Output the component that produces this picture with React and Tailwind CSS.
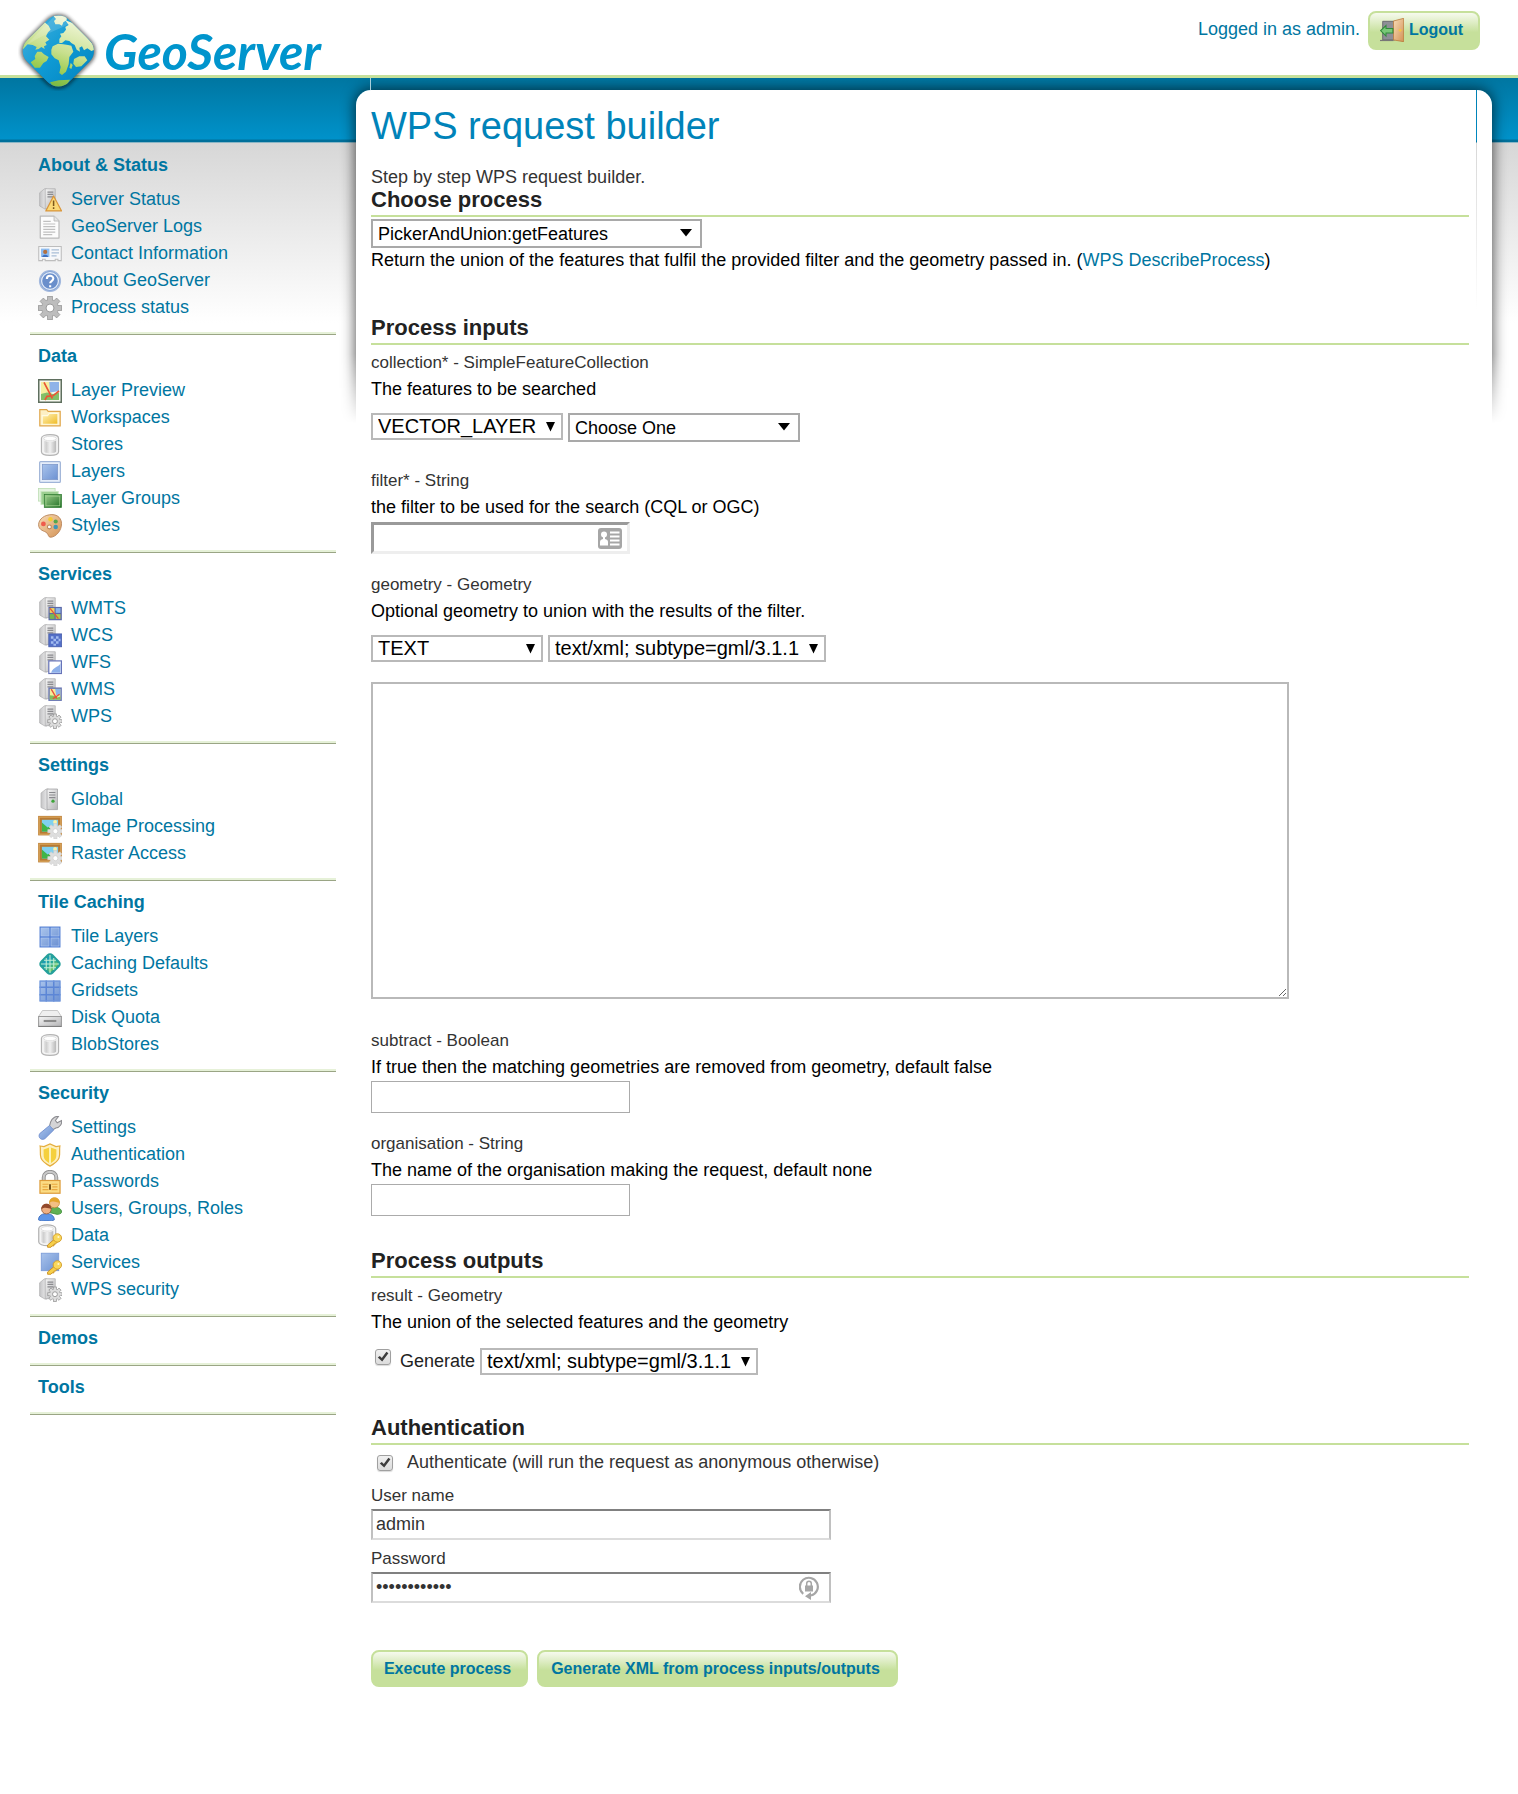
import React from "react";

/* ---------- icons: drawn on a 16 unit grid ---------- */

function Svg({ children }) {
  return (
    <svg viewBox="0 0 16 16" className="size-6 shrink-0" aria-hidden="true">
      {children}
    </svg>
  );
}

function Defs() {
  return (
    <svg width="0" height="0" className="absolute" aria-hidden="true">
      <defs>
        <linearGradient id="metal" x1="0" y1="0" x2="1" y2="1">
          <stop offset="0" stopColor="#f6f6f6" />
          <stop offset="1" stopColor="#b4b4b6" />
        </linearGradient>
        <linearGradient id="side" x1="0" y1="0" x2="1" y2="0">
          <stop offset="0" stopColor="#c4c4c6" />
          <stop offset="1" stopColor="#efeff0" />
        </linearGradient>
        <linearGradient id="cyl" x1="0" y1="0" x2="1" y2="0">
          <stop offset="0" stopColor="#e6e6e6" />
          <stop offset=".2" stopColor="#cfcfcf" />
          <stop offset=".5" stopColor="#f0f0f0" />
          <stop offset="1" stopColor="#b8b8b8" />
        </linearGradient>
        <linearGradient id="blue" x1="0" y1="0" x2="1" y2="1">
          <stop offset="0" stopColor="#a9c4ec" />
          <stop offset="1" stopColor="#6c91d2" />
        </linearGradient>
        <linearGradient id="green" x1="0" y1="0" x2="1" y2="1">
          <stop offset="0" stopColor="#9fd08e" />
          <stop offset="1" stopColor="#1f6e23" />
        </linearGradient>
        <linearGradient id="gold" x1="0" y1="0" x2="1" y2="1">
          <stop offset="0" stopColor="#fff3bd" />
          <stop offset="1" stopColor="#efb91f" />
        </linearGradient>
        <linearGradient id="wood" x1="0" y1="0" x2="1" y2="1">
          <stop offset="0" stopColor="#f8dcb8" />
          <stop offset="1" stopColor="#d39255" />
        </linearGradient>
        <linearGradient id="teal" x1="0" y1="0" x2="1" y2="0">
          <stop offset="0" stopColor="#1597c4" />
          <stop offset=".5" stopColor="#2aa99b" />
          <stop offset="1" stopColor="#8fd04f" />
        </linearGradient>
      </defs>
    </svg>
  );
}

function ServerBody() {
  return (
    <g>
      <path d="M1.100 3.200 4.200.6H6v13.400H4.600L1.100 12z" fill="url(#side)" stroke="#b0b0b2" strokeWidth=".5" />
      <path d="M4.800.5h6.700v13.300H4.800z" fill="url(#metal)" stroke="#adadaf" strokeWidth=".5" />
      <path d="M6.300 2.700h3.900M6.300 4.300h3.900M6.300 5.900h3.900" stroke="#8a8a8e" strokeWidth=".8" />
    </g>
  );
}

function GearShape({ cx, cy, r, fill = "#c9c9cb", stroke = "#8a8a8c" }) {
  const teeth = [0, 45, 90, 135];
  return (
    <g>
      {teeth.map((a) => (
        <rect
          key={a}
          x={cx - r * 0.2}
          y={cy - r}
          width={r * 0.4}
          height={r * 2}
          fill={fill}
          stroke={stroke}
          strokeWidth=".5"
          transform={`rotate(${a} ${cx} ${cy})`}
        />
      ))}
      <circle cx={cx} cy={cy} r={r * 0.72} fill={fill} stroke={stroke} strokeWidth=".4" />
      {teeth.map((a) => (
        <rect
          key={a}
          x={cx - r * 0.17}
          y={cy - r * 0.85}
          width={r * 0.34}
          height={r * 1.7}
          fill={fill}
          transform={`rotate(${a} ${cx} ${cy})`}
        />
      ))}
      <circle cx={cx} cy={cy} r={r * 0.34} fill="#fff" stroke={stroke} strokeWidth=".6" />
    </g>
  );
}

function KeyShape() {
  return (
    <g>
      <path d="M12.300 9 6.400 14v1.500h2.200l.8-.9h1.200v-1.100l1-.2 2.400-2.100z" fill="#f6cf4a" stroke="#c98c1c" strokeWidth=".6" />
      <circle cx="12.900" cy="9.300" r="2.800" fill="#f9d85c" stroke="#d39a26" strokeWidth=".6" />
      <circle cx="13.600" cy="8.700" r=".7" fill="#fff6cf" />
    </g>
  );
}

function MapTile({ x, y, s }) {
  return (
    <svg x={x} y={y} width={s} height={s} viewBox="0 0 10 10">
      <rect width="10" height="10" fill="#f4ee9a" />
      <path d="M5 0h5v6H6z" fill="#8fb4e6" />
      <path d="M0 10V6l4 .5L7 8l3-1v3z" fill="#7fbf5c" />
      <path d="M1.5.5 6.5 9M9 5 5.5 7.5 3 9" stroke="#e8503a" strokeWidth="1.2" fill="none" />
    </svg>
  );
}

const icons = {
  serverWarn: (
    <Svg>
      <ServerBody />
      <path d="m10.400 5.300 5.300 10H5.200z" fill="#fbd978" stroke="#d9953a" strokeWidth=".8" strokeLinejoin="round" />
      <path d="M10.400 8.400v3.600M10.400 12.900v1.100" stroke="#7b561a" strokeWidth="1" />
    </Svg>
  ),
  page: (
    <Svg>
      <path d="M1.500.7h9.200L14 4v11.400H1.500z" fill="#fcfcfc" stroke="#b9b9b9" strokeWidth=".8" strokeLinejoin="round" />
      <path d="M10.700.7V4H14" fill="#e6e6e6" stroke="#b9b9b9" strokeWidth=".6" />
      <path d="M3.500 4.200h5M3.500 6h8M3.500 7.800h8M3.500 9.600h8M3.500 11.400h8M3.500 13.100h6" stroke="#c0c0c0" strokeWidth=".8" />
    </Svg>
  ),
  card: (
    <Svg>
      <path d="M.5 3h15v9.400h-2.200v-.9h-1.800v.9H4.800v-.9H3v.9H.5z" fill="#f7f8fa" stroke="#bdbdbd" strokeWidth=".7" />
      <rect x="2" y="4.400" width="5.600" height="5.600" fill="#8dbdf3" />
      <circle cx="4.800" cy="6.600" r="1.400" fill="#b4713f" />
      <path d="M2.800 10c.2-2 3.800-2 4 0z" fill="#3e6fbe" />
      <path d="M9 5.200h5M9 7.200h5M9 9.200h3.400" stroke="#a9bdd6" strokeWidth=".8" />
    </Svg>
  ),
  help: (
    <Svg>
      <circle cx="8" cy="8" r="7" fill="#87a6d6" stroke="#a3b9de" strokeWidth=".8" />
      <circle cx="8" cy="8" r="5.600" fill="#6a8fcb" stroke="#e6eefa" strokeWidth=".8" />
      <path d="M5.900 6.600c0-2.800 4.300-2.700 4.300-.2 0 1.700-2.100 1.600-2.100 3.100M8.100 10.800v1.300" stroke="#fff" strokeWidth="1.400" fill="none" />
    </Svg>
  ),
  gear: (
    <Svg>
      <GearShape cx={8} cy={8} r={7.800} fill="#bdbdbd" stroke="#929292" />
    </Svg>
  ),
  preview: (
    <Svg>
      <rect x=".5" y=".5" width="15" height="15" fill="#f7f9ef" stroke="#5f6f5f" strokeWidth="1" />
      <path d="M2 2h7v12H2z" fill="#f5efa0" />
      <path d="M7.500 2H14v6L8 9z" fill="#8fb3e8" />
      <path d="M2 14v-4l4-1 4 1 4-1v5z" fill="#83bf68" />
      <path d="M4 2.200 9.600 13M14 8l-4 3.200-4 .4L4.600 14" fill="none" stroke="#ea5535" strokeWidth="1.100" />
    </Svg>
  ),
  folder: (
    <Svg>
      <path d="M1.200 2.400h4.600l1 1.200h8v9.600H1.200z" fill="#fdf0c4" stroke="#e0a64a" strokeWidth=".8" />
      <path d="M2.800 12.200V6.400h3.600L7.500 5h5.800v7.200z" fill="url(#gold)" stroke="#fffbe4" strokeWidth=".7" />
    </Svg>
  ),
  cylinder: (
    <Svg>
      <path d="M2.300 3.500C2.300.3 13.700.3 13.700 3.500v9c0 3.200-11.400 3.200-11.400 0z" fill="#f4f4f4" stroke="#b4b4b4" strokeWidth=".8" />
      <path d="M3.900 4.600c0 1.600 8.200 1.600 8.200 0v7.600c0 1.700-8.200 1.700-8.200 0z" fill="url(#cyl)" />
      <ellipse cx="8" cy="3.700" rx="4.200" ry="1.500" fill="#fff" stroke="#d4d4d4" strokeWidth=".5" />
    </Svg>
  ),
  layer: (
    <Svg>
      <rect x="1.100" y="1.100" width="13.800" height="13.800" rx=".6" fill="#e9f0fb" stroke="#9fb4d8" strokeWidth=".8" />
      <rect x="2.900" y="2.900" width="10.200" height="10.200" fill="url(#blue)" stroke="#7c97c8" strokeWidth=".5" />
    </Svg>
  ),
  group: (
    <Svg>
      <rect x=".4" y="1" width="11" height="8.400" fill="#e4f3df" stroke="#b9dcb0" strokeWidth=".5" />
      <rect x="2" y="3" width="11.500" height="8.600" fill="#9ccf90" stroke="#c9e6c0" strokeWidth=".6" />
      <rect x="4.200" y="5" width="11.400" height="8.600" fill="url(#green)" stroke="#2c7a2f" strokeWidth=".5" />
      <rect x="5.300" y="6.100" width="9.200" height="6.400" fill="none" stroke="#9fd08e" strokeWidth=".5" />
    </Svg>
  ),
  palette: (
    <Svg>
      <path d="M.4 7.200C.4 3.300 4.500.4 9.300.4c4.100 0 6.400 2.800 6.400 6.100 0 4.500-3.500 8.600-7.100 9-1.800.1-1.600-1.900-2.700-2.900C4.500 11.200.4 11.100.4 7.200z" fill="url(#wood)" stroke="#b9855a" strokeWidth=".6" />
      <circle cx="3.600" cy="6.600" r="1.600" fill="#ef5b4c" />
      <circle cx="8.300" cy="3.500" r="1.500" fill="#f5cb36" />
      <circle cx="11.800" cy="5" r="1.400" fill="#53a84c" />
      <circle cx="11.800" cy="8.700" r="1.500" fill="#3e97b8" />
      <circle cx="7.600" cy="8.600" r="1.300" fill="#fff" stroke="#b9855a" strokeWidth=".7" />
    </Svg>
  ),
  wmts: (
    <Svg>
      <ServerBody />
      <rect x="7" y="6.600" width="8.900" height="8.900" fill="#5d6aa8" />
      <path d="M7.800 7.400h3.200v3.200H7.800z" fill="#f3d65c" />
      <path d="M11.800 7.400H15v3.200h-3.200z" fill="#8db6ea" />
      <path d="M7.800 11.400h3.200v3.200H7.800z" fill="#79b84f" />
      <path d="M11.800 11.400H15v3.200h-3.200z" fill="#b4c852" />
      <path d="m8 7.600 5.600 6.800" stroke="#e4573a" strokeWidth=".9" />
    </Svg>
  ),
  wcs: (
    <Svg>
      <ServerBody />
      <rect x="7.200" y="6.600" width="8.600" height="8.600" fill="#5470c8" stroke="#4359a8" strokeWidth=".5" />
      <path d="M8.600 8.100h1.700v1.700H8.600zM12 8.100h1.700v1.700H12zM10.300 9.800H12v1.700h-1.700zM13.700 9.800h1.300v1.700h-1.300zM8.600 11.500h1.700v1.700H8.600zM12 11.500h1.700v1.700H12zM10.300 13.200H12v1.300h-1.700z" fill="#a3bcf0" />
    </Svg>
  ),
  wfs: (
    <Svg>
      <ServerBody />
      <rect x="7.200" y="6.600" width="8.400" height="8.400" fill="#fff" stroke="#6673b8" strokeWidth=".8" />
      <path d="M15 8c-1 3-4.500 2-6.300 6.500H15z" fill="#8db0ea" />
    </Svg>
  ),
  wms: (
    <Svg>
      <ServerBody />
      <rect x="6.900" y="6.300" width="9" height="9" fill="#6b78b4" />
      <MapTile x={7.700} y={7.100} s={7.400} />
    </Svg>
  ),
  wps: (
    <Svg>
      <ServerBody />
      <GearShape cx={11.300} cy={10.800} r={4.800} fill="#dcdcdc" stroke="#949494" />
    </Svg>
  ),
  server: (
    <Svg>
      <path d="M2 3.400 5.400.7H7v13.900H5.600L2 13z" fill="url(#side)" stroke="#b4b4b6" strokeWidth=".5" />
      <path d="M6 .7h7v13.700H6z" fill="url(#metal)" stroke="#a9a9ab" strokeWidth=".6" />
      <path d="M7.400 3h4.200M7.400 4.700h4.200M7.400 6.400h4.200" stroke="#8a8a8e" strokeWidth=".7" />
      <circle cx="10" cy="8.800" r="1.100" fill="#3fa53c" />
    </Svg>
  ),
  picture: (
    <Svg>
      <rect x=".1" y=".6" width="15.800" height="13" fill="#b87a33" />
      <rect x=".8" y="1.400" width="14.400" height="11.400" fill="none" stroke="#d9a55c" strokeWidth=".8" />
      <rect x="2.600" y="3.200" width="10.800" height="7.800" fill="#7fd0f0" />
      <circle cx="11.400" cy="4.600" r="1.300" fill="#fdf2a5" />
      <path d="m2.600 5 3.800 3.400L9 7l4.400 4H2.600z" fill="#3fb54a" />
      <GearShape cx={11.600} cy={10.800} r={5} fill="#dedede" stroke="#d0d0d0" />
    </Svg>
  ),
  tiles: (
    <Svg>
      <rect x="1" y="1" width="14" height="14" fill="#5c86d6" />
      <path d="M2 2h5.300v5.300H2zM8.700 2H14v5.300H8.700zM2 8.700h5.300V14H2zM8.700 8.700H14V14H8.700z" fill="url(#blue)" stroke="#b5cdf3" strokeWidth=".4" />
    </Svg>
  ),
  diamond: (
    <Svg>
      <rect x="3" y="3" width="10" height="10" rx="2" transform="rotate(45 8 8)" fill="url(#teal)" stroke="#25a09b" strokeWidth="1.800" />
      <path d="M5.500 4v8M8 2v12M10.500 4v8M4 5.500h8M2 8h12M4 10.500h8" stroke="#c3f0d4" strokeWidth=".7" />
    </Svg>
  ),
  grid: (
    <Svg>
      <rect x="1" y="1" width="14" height="14" fill="url(#blue)" />
      <path d="M5.500 1v14M10.500 1v14M1 5.500h14M1 10.500h14" stroke="#5c86d6" strokeWidth="1" />
      <path d="M1.400 1.400h13.200v13.200H1.400z" fill="none" stroke="#6f95dc" strokeWidth=".8" />
    </Svg>
  ),
  drive: (
    <Svg>
      <path d="M3 3h10L15.600 7H.4z" fill="#efefef" stroke="#c2c2c2" strokeWidth=".6" />
      <path d="M.4 7h15.200v6.600H.4z" fill="url(#metal)" stroke="#9a9a9a" strokeWidth=".7" />
      <path d="M3.800 10h8.400" stroke="#8b8b8b" strokeWidth="1.400" />
      <path d="M.4 13.600h15.200" stroke="#777" strokeWidth=".6" />
    </Svg>
  ),
  wrench: (
    <Svg>
      <path d="m7.600 7 .8-3C9.400 1.200 12 0 13.600.4l-2 2.600 1.200 1.500 2.900-1.500c.4 2.200-1 4.700-3.800 5L9.800 9.200z" fill="#d4d4d6" stroke="#8c8c90" strokeWidth=".7" />
      <path d="m7.600 6.400 2.900 2.900-5.900 5.800c-2.400 1.600-5-1-3.400-3.400z" fill="url(#blue)" stroke="#7391cf" strokeWidth=".6" />
    </Svg>
  ),
  shield: (
    <Svg>
      <path d="M1.400 2 4 2.400 8 .6l4 1.800 2.600-.4c-.6 3 .4 5.400-.6 8-.9 2.400-3.400 4-6 5.400-2.600-1.400-5.100-3-6-5.400-1-2.600 0-5-.6-8z" fill="#fdf0bf" stroke="#e5ad3b" strokeWidth=".8" />
      <path d="M3.700 4.300 8 2.800l4.300 1.500c-.2 3 .2 4.400-.5 6-.6 1.400-2.200 2.400-3.800 3.300-1.600-.9-3.200-1.900-3.800-3.300-.7-1.600-.3-3-.5-6z" fill="#f5d03d" />
      <path d="M8 2.800v10.800" stroke="#fdf6c4" strokeWidth="1.200" />
    </Svg>
  ),
  lock: (
    <Svg>
      <path d="M3.800 8V5c0-5 8.400-5 8.400 0v3" fill="none" stroke="#8e8e8e" strokeWidth="2.600" />
      <path d="M3.800 8V5c0-5 8.400-5 8.400 0v3" fill="none" stroke="#c9c9c9" strokeWidth="1.400" />
      <rect x="1.300" y="7" width="13.400" height="8.500" fill="#fbdc84" stroke="#dd9c3a" strokeWidth=".8" />
      <path d="M3 9.500h4M3 11.300h3.400M3 13.100h4M9 9.500h4M9.600 11.300H13M9 13.100h4" stroke="#e9a83f" strokeWidth=".8" />
      <path d="M8 9.500v3.600" stroke="#76521a" strokeWidth="1.300" />
    </Svg>
  ),
  users: (
    <Svg>
      <path d="M7 10.200c0-4.400 8.800-4.600 8.800 0-.4 1-2 1.400-3 1.400z" fill="#5fb154" stroke="#3b8a37" strokeWidth=".5" />
      <circle cx="11" cy="3.900" r="3.300" fill="#f3bf85" stroke="#c98e2c" strokeWidth=".5" />
      <path d="M7.500 4C7.500-.8 14.500-.8 14.500 4 12.800 3.800 10 2 7.500 4z" fill="#e4a52c" />
      <path d="M.3 15.200c0-5.600 10.600-5.600 10.600 0-.6 1.100-10 1.100-10.600 0z" fill="#5d95e8" stroke="#2f62b5" strokeWidth=".5" />
      <circle cx="5.600" cy="8.100" r="3.200" fill="#eeb083" stroke="#96542e" strokeWidth=".5" />
      <path d="M2.200 8c0-4.600 6.800-4.600 6.800 0-2-.4-4.200-1.600-6.800 0z" fill="#92492a" />
    </Svg>
  ),
  cylinderKey: (
    <Svg>
      <path d="M.5 3C.5-.2 11.800-.2 11.800 3v9c0 3.200-11.300 3.200-11.300 0z" fill="#f4f4f4" stroke="#b0b0b0" strokeWidth=".8" />
      <path d="M2.100 4.200c0 1.600 8.100 1.600 8.100 0v7.400c0 1.700-8.100 1.700-8.100 0z" fill="url(#cyl)" />
      <ellipse cx="6.150" cy="3.200" rx="4.100" ry="1.500" fill="#fff" stroke="#d4d4d4" strokeWidth=".5" />
      <KeyShape />
    </Svg>
  ),
  layerKey: (
    <Svg>
      <rect x="2.200" y="1.500" width="11.600" height="11.600" fill="url(#blue)" stroke="#7d9dd9" strokeWidth=".6" />
      <KeyShape />
    </Svg>
  ),
  door: (
    <Svg>
      <path d="M1.800 2.200H10v12.400H1.800z" fill="#8d8f96" stroke="#63656b" strokeWidth=".6" />
      <path d="M0 15h9" stroke="#777" strokeWidth=".8" />
      <path d="M9 2 15.800.2v15.600L9 14.600z" fill="url(#wood)" stroke="#b87536" strokeWidth=".5" />
      <circle cx="13.400" cy="8.200" r=".9" fill="#f7c545" />
      <path d="M.4 8.400 4 5v2h4.600v3H4v2z" fill="#79c878" stroke="#2f8b3a" strokeWidth=".7" />
    </Svg>
  ),
};

/* ---------- logo ---------- */

function Globe() {
  return (
    <svg viewBox="54 30 246 246" className="size-[82px]" aria-hidden="true">
      <defs>
        <linearGradient id="sea" x1="0" y1="0" x2="1" y2="1">
          <stop offset="0" stopColor="#4fb4de" />
          <stop offset=".5" stopColor="#0f9ad4" />
          <stop offset="1" stopColor="#0080bd" />
        </linearGradient>
        <linearGradient id="land" gradientUnits="userSpaceOnUse" x1="200" y1="50" x2="130" y2="250">
          <stop offset="0" stopColor="#f2f7dc" />
          <stop offset=".5" stopColor="#c9e08f" />
          <stop offset=".75" stopColor="#a3cf58" />
          <stop offset="1" stopColor="#79b843" />
        </linearGradient>
        <clipPath id="globeClip">
          <rect x="86" y="67" width="178" height="178" rx="46" transform="rotate(45 175 156)" />
        </clipPath>
        <filter id="globeShadow" x="-20%" y="-20%" width="140%" height="140%">
          <feGaussianBlur stdDeviation="7" />
        </filter>
      </defs>
      <rect x="84" y="66" width="182" height="182" rx="46" transform="rotate(45 175 157)" fill="#111" opacity=".8" filter="url(#globeShadow)" />
      <g clipPath="url(#globeClip)">
        <rect x="60" y="40" width="230" height="230" fill="url(#sea)" />
        <g fill="url(#land)">
          <path d="M160 50 200 48 200 64 190 70 186 80 178 76 166 76 162 66 168 60z" />
          <path d="M130 66 146 80 152 92 144 100 138 112 148 122 136 130 140 138 132 142 134 150 124 144 116 150 106 152 110 144 98 138 82 136 70 150 56 140z" />
          <path d="M112 158 124 158 132 166 146 174 140 186 130 192 120 206 104 206 92 190 106 180 104 172 108 164z" />
          <path d="M196 64 218 72 252 104 290 150 274 156 262 148 252 154 246 142 238 146 240 158 230 152 224 138 214 132 208 126 196 124 186 132 178 132 178 120 184 112 180 104 190 102 198 92 196 84 206 78z" />
          <path d="M158 142 174 134 190 136 204 138 214 140 220 158 208 174 206 196 198 218 186 228 178 222 182 204 176 184 164 178 154 166 154 152z" />
          <path d="M222 180 238 172 254 172 262 184 244 202 228 204 220 194z" />
          <path d="M212 192 218 198 214 210 208 206z" />
          <path d="M150 250 176 244 210 242 194 268 162 268z" />
        </g>
        <path d="M60 156 175 40l34 34C168 96 110 110 60 156z" fill="#fff" opacity=".14" />
      </g>
    </svg>
  );
}

/* ---------- form controls ---------- */

function Heading({ children }) {
  return (
    <h2 className="border-b-2 border-[#c6e09b] pb-[3px] text-[22px] leading-6 font-bold text-[#222]">{children}</h2>
  );
}

function Select({ label, options, size = "lg", className }) {
  const lg = size === "lg";
  return (
    <span className={"relative inline-block " + className}>
      <select
        aria-label={label}
        className={
          lg
            ? "block h-[27px] w-full appearance-none border-2 border-[#b9b9b9] bg-white pl-[5px] text-[20px] leading-[23px] text-black"
            : "block h-[29px] w-full appearance-none border-2 border-[#a9a9a9] bg-white pt-0.5 pl-[5px] text-[18px] leading-[23px] text-black"
        }
      >
        {options.map((o) => (
          <option key={o}>{o}</option>
        ))}
      </select>
      <span className="pointer-events-none absolute inset-y-0 right-2 flex items-center">
        {lg ? (
          <svg width="9" height="10" aria-hidden="true">
            <path d="M0 0h9L4.500 9.500z" />
          </svg>
        ) : (
          <svg width="14" height="10" aria-hidden="true">
            <path d="M0 0h12L6 7.500z" />
          </svg>
        )}
      </span>
    </span>
  );
}

function Field({ id, label, text, children, className }) {
  return (
    <div className={className}>
      <label htmlFor={id} className="block text-[17px] leading-[27px] text-[#333]">
        {label}
      </label>
      <p className="text-[18px] leading-[27px] text-black">{text}</p>
      {children}
    </div>
  );
}

function Check({ id, className }) {
  return (
    <span className={"relative inline-block size-4 " + className}>
      <input
        id={id}
        type="checkbox"
        defaultChecked
        className="peer block size-4 appearance-none rounded-[3px] border border-[#a0a0a0] bg-linear-to-b from-[#f0f0f0] to-[#dcdcdc] shadow-[0_1px_1px_rgba(0,0,0,0.15)]"
      />
      <svg viewBox="0 0 16 16" className="pointer-events-none invisible absolute inset-0 peer-checked:visible" aria-hidden="true">
        <path d="m2.800 8.600 2-1.700 2 2L11.400 2.800l2 1.400L7.200 12.600z" fill="#3d3d3d" />
      </svg>
    </span>
  );
}

const buttonClass =
  "rounded-lg border-2 border-[#c6e09b] bg-[linear-gradient(to_bottom,#f6faee,#c6e09b_55%)] text-[16px] font-bold text-[#0076a1]";

/* ---------- sidebar ---------- */

const menu = [
  ["About & Status", [["serverWarn", "Server Status"], ["page", "GeoServer Logs"], ["card", "Contact Information"], ["help", "About GeoServer"], ["gear", "Process status"]]],
  ["Data", [["preview", "Layer Preview"], ["folder", "Workspaces"], ["cylinder", "Stores"], ["layer", "Layers"], ["group", "Layer Groups"], ["palette", "Styles"]]],
  ["Services", [["wmts", "WMTS"], ["wcs", "WCS"], ["wfs", "WFS"], ["wms", "WMS"], ["wps", "WPS"]]],
  ["Settings", [["server", "Global"], ["picture", "Image Processing"], ["picture", "Raster Access"]]],
  ["Tile Caching", [["tiles", "Tile Layers"], ["diamond", "Caching Defaults"], ["grid", "Gridsets"], ["drive", "Disk Quota"], ["cylinder", "BlobStores"]]],
  ["Security", [["wrench", "Settings"], ["shield", "Authentication"], ["lock", "Passwords"], ["users", "Users, Groups, Roles"], ["cylinderKey", "Data"], ["layerKey", "Services"], ["wps", "WPS security"]]],
  ["Demos", []],
  ["Tools", []],
];

function Sidebar() {
  return (
    <nav className="w-[356px] shrink-0 pt-[66px] pr-5 pl-[30px]">
      {menu.map(([title, items]) => (
        <section key={title} className="border-b border-[#9aa585] pt-2 pl-2 shadow-[inset_0_-2px_0_#e6f1d8]">
          <h3 className="text-[18px] leading-[27px] font-bold text-[#0076a1]">{title}</h3>
          {items.length > 0 ? (
            <ul className="pt-[7px] pb-[13px]">
              {items.map(([icon, text]) => (
                <li key={text}>
                  <a href="#" className="flex h-[27px] items-center gap-[9px] text-[18px] text-[#0076a1]">
                    {icons[icon]}
                    {text}
                  </a>
                </li>
              ))}
            </ul>
          ) : (
            <div className="h-[13px]" />
          )}
        </section>
      ))}
    </nav>
  );
}

/* ---------- page ---------- */

export default function App() {
  return (
    <div className="min-h-screen bg-white font-['Liberation_Sans',Arial,sans-serif]">
      <Defs />
      <header className="flex h-[78px] items-start justify-between border-b-[3px] border-[#c6e09b] pr-[38px] pl-[18px]">
        <a href="#" className="relative z-10 flex items-start gap-1 pt-[9px]">
          <Globe />
          <span className="pt-4 font-['Lato',sans-serif] text-[50px] leading-[52px] font-bold text-[#0095cd] italic">
            GeoServer
          </span>
        </a>
        <div className="flex gap-2 pt-[11px]">
          <span className="pt-[5px] text-[18px] leading-[27px] text-[#0076a1]">Logged in as admin.</span>
          <button type="button" className={buttonClass + " flex h-[39px] w-[112px] items-center gap-[5px] pb-px pl-[10px]"}>
            {icons.door}
            Logout
          </button>
        </div>
      </header>

      <div className="flex bg-[linear-gradient(to_bottom,#0076a1_0,#0092ca_61px,#00709b_62px,#00709b_64px,#8ab6c6_64px,#8ab6c6_65px,#d7d7d7_65px,#fff_245px)]">
        <Sidebar />
        <div className="relative mt-3 mr-[26px] min-w-0 flex-1">
          <div className="pointer-events-none absolute -inset-x-5 -top-3 h-[345px] overflow-hidden mask-[linear-gradient(to_bottom,#000_80%,transparent)]">
            <div className="mx-5 mt-3 h-[500px] rounded-[15px] shadow-[0_0_14px_1px_rgba(0,0,0,0.65)]" />
            <div className="absolute top-0 left-[34px] h-3 w-px bg-[#a9cfdc]" />
          </div>
          <main className="relative h-full rounded-t-[15px] bg-white pt-[14px] pr-[23px] pb-[106px] pl-[15px]">
            <div className="absolute top-0 right-[15px] h-[240px] w-px bg-[linear-gradient(to_bottom,#0080b3_0,#0088c0_50px,#00709b_52px,#d7d7d7_53px,#fff_220px)]" />
            <h1 className="text-[38px] leading-11 text-[#0083b9]">WPS request builder</h1>
            <p className="mt-[19px] text-[18px] leading-[21px] text-[#333]">Step by step WPS request builder.</p>

            <section>
              <Heading>Choose process</Heading>
              <Select size="sm" label="Process" options={["PickerAndUnion:getFeatures"]} className="mt-0.5 w-[331px] align-top" />
              <p className="text-[18px] leading-6 text-black">
                Return the union of the features that fulfil the provided filter and the geometry passed in. (
                <a href="#" className="text-[#0076a1]">WPS DescribeProcess</a>)
              </p>
            </section>

            <section className="mt-11">
              <Heading>Process inputs</Heading>
              <Field id="collection" label="collection* - SimpleFeatureCollection" text="The features to be searched" className="mt-1">
                <div className="mt-[10px] flex items-start gap-[5px]">
                  <Select label="Collection source" options={["VECTOR_LAYER"]} className="w-48" />
                  <Select size="sm" label="Layer" options={["Choose One"]} className="w-[232px]" />
                </div>
              </Field>
              <Field id="filter" label="filter* - String" text="the filter to be used for the search (CQL or OGC)" className="mt-[25px]">
                <div className="relative mt-px w-[259px]">
                  <input
                    id="filter"
                    type="text"
                    className="block h-8 w-full border-3 border-t-[#9a9a9a] border-r-[#eee] border-b-[#eee] border-l-[#9a9a9a] bg-white pr-8 pl-1 text-[18px]"
                  />
                  <svg viewBox="0 0 24 21" className="pointer-events-none absolute top-1.5 right-2 h-[21px] w-6" aria-hidden="true">
                    <rect width="24" height="21" rx="3" fill="#a6a6a6" />
                    <circle cx="6" cy="6.500" r="3" fill="#fff" />
                    <path d="M5 8h2v3c2 .4 3 1.600 3 3v3.500H2V14c0-1.400 1-2.600 3-3z" fill="#fff" />
                    <path d="M12 4.500h9.500M12 8.500h9.500M12 12.500h9.500M12 16.500h9.500" stroke="#fff" strokeWidth="1.800" />
                  </svg>
                </div>
              </Field>
              <Field id="geometry" label="geometry - Geometry" text="Optional geometry to union with the results of the filter." className="mt-[17px]">
                <div className="mt-[10px] flex items-start gap-[5px]">
                  <Select label="Geometry source" options={["TEXT"]} className="w-[172px]" />
                  <Select label="Geometry format" options={["text/xml; subtype=gml/3.1.1"]} className="w-[278px]" />
                </div>
                <textarea id="geometry" className="mt-5 block h-[317px] w-[918px] max-w-full border-2 border-[#b9b9b9] bg-white p-1 text-[18px]" />
              </Field>
              <Field id="subtract" label="subtract - Boolean" text="If true then the matching geometries are removed from geometry, default false" className="mt-7">
                <input id="subtract" type="text" className="block h-8 w-[259px] border border-[#ababab] bg-white px-1 text-[18px]" />
              </Field>
              <Field id="organisation" label="organisation - String" text="The name of the organisation making the request, default none" className="mt-[17px]">
                <input id="organisation" type="text" className="block h-8 w-[259px] border border-[#ababab] bg-white px-1 text-[18px]" />
              </Field>
            </section>

            <section className="mt-[33px]">
              <Heading>Process outputs</Heading>
              <Field id="generate" label="result - Geometry" text="The union of the selected features and the geometry" className="mt-1">
                <div className="mt-3 flex items-start">
                  <Check id="generate" className="mt-px ml-1" />
                  <label htmlFor="generate" className="ml-[9px] text-[18px] leading-[27px] text-[#222]">
                    Generate
                  </label>
                  <Select label="Output format" options={["text/xml; subtype=gml/3.1.1"]} className="ml-[5px] w-[278px]" />
                </div>
              </Field>
            </section>

            <section className="mt-[41px]">
              <Heading>Authentication</Heading>
              <div className="mt-1 flex items-center">
                <Check id="authenticate" className="ml-1.5" />
                <label htmlFor="authenticate" className="ml-[14px] text-[18px] leading-[27px] text-[#333]">
                  Authenticate (will run the request as anonymous otherwise)
                </label>
              </div>
              <label htmlFor="user" className="mt-1.5 block text-[17px] leading-[27px] text-[#333]">
                User name
              </label>
              <input
                id="user"
                type="text"
                defaultValue="admin"
                className="block h-[31px] w-[460px] border-2 border-t-[#808080] border-r-[#c0c0c0] border-b-[#dcdcdc] border-l-[#c0c0c0] bg-white pl-[3px] text-[18px] text-[#333]"
              />
              <label htmlFor="password" className="mt-[5px] block text-[17px] leading-[27px] text-[#333]">
                Password
              </label>
              <div className="relative w-[460px]">
                <input
                  id="password"
                  type="password"
                  defaultValue="geoserver123"
                  className="block h-[31px] w-full border-2 border-t-[#808080] border-r-[#c0c0c0] border-b-[#dcdcdc] border-l-[#c0c0c0] bg-white pr-10 pl-[3px] text-[18px] text-[#333]"
                />
                <svg viewBox="0 0 20 24" className="pointer-events-none absolute top-1 right-3 h-6 w-5" aria-hidden="true" fill="none" stroke="#a6a6a6">
                  <path d="M4.200 17.800A9 9 0 1 1 12 19.500" strokeWidth="2.200" />
                  <path d="m6 20.200 6-4.200v8z" fill="#a6a6a6" stroke="none" />
                  <rect x="6" y="9.500" width="8" height="6" fill="#a6a6a6" stroke="none" />
                  <path d="M7.700 10V7.500c0-3 4.600-3 4.600 0V10" strokeWidth="1.500" />
                </svg>
              </div>
            </section>

            <div className="mt-[47px] flex gap-[9px]">
              <button type="button" className={buttonClass + " h-[37px] w-[157px] pr-1"}>Execute process</button>
              <button type="button" className={buttonClass + " h-[37px] w-[361px] pr-1"}>Generate XML from process inputs/outputs</button>
            </div>
          </main>
        </div>
      </div>
    </div>
  );
}
